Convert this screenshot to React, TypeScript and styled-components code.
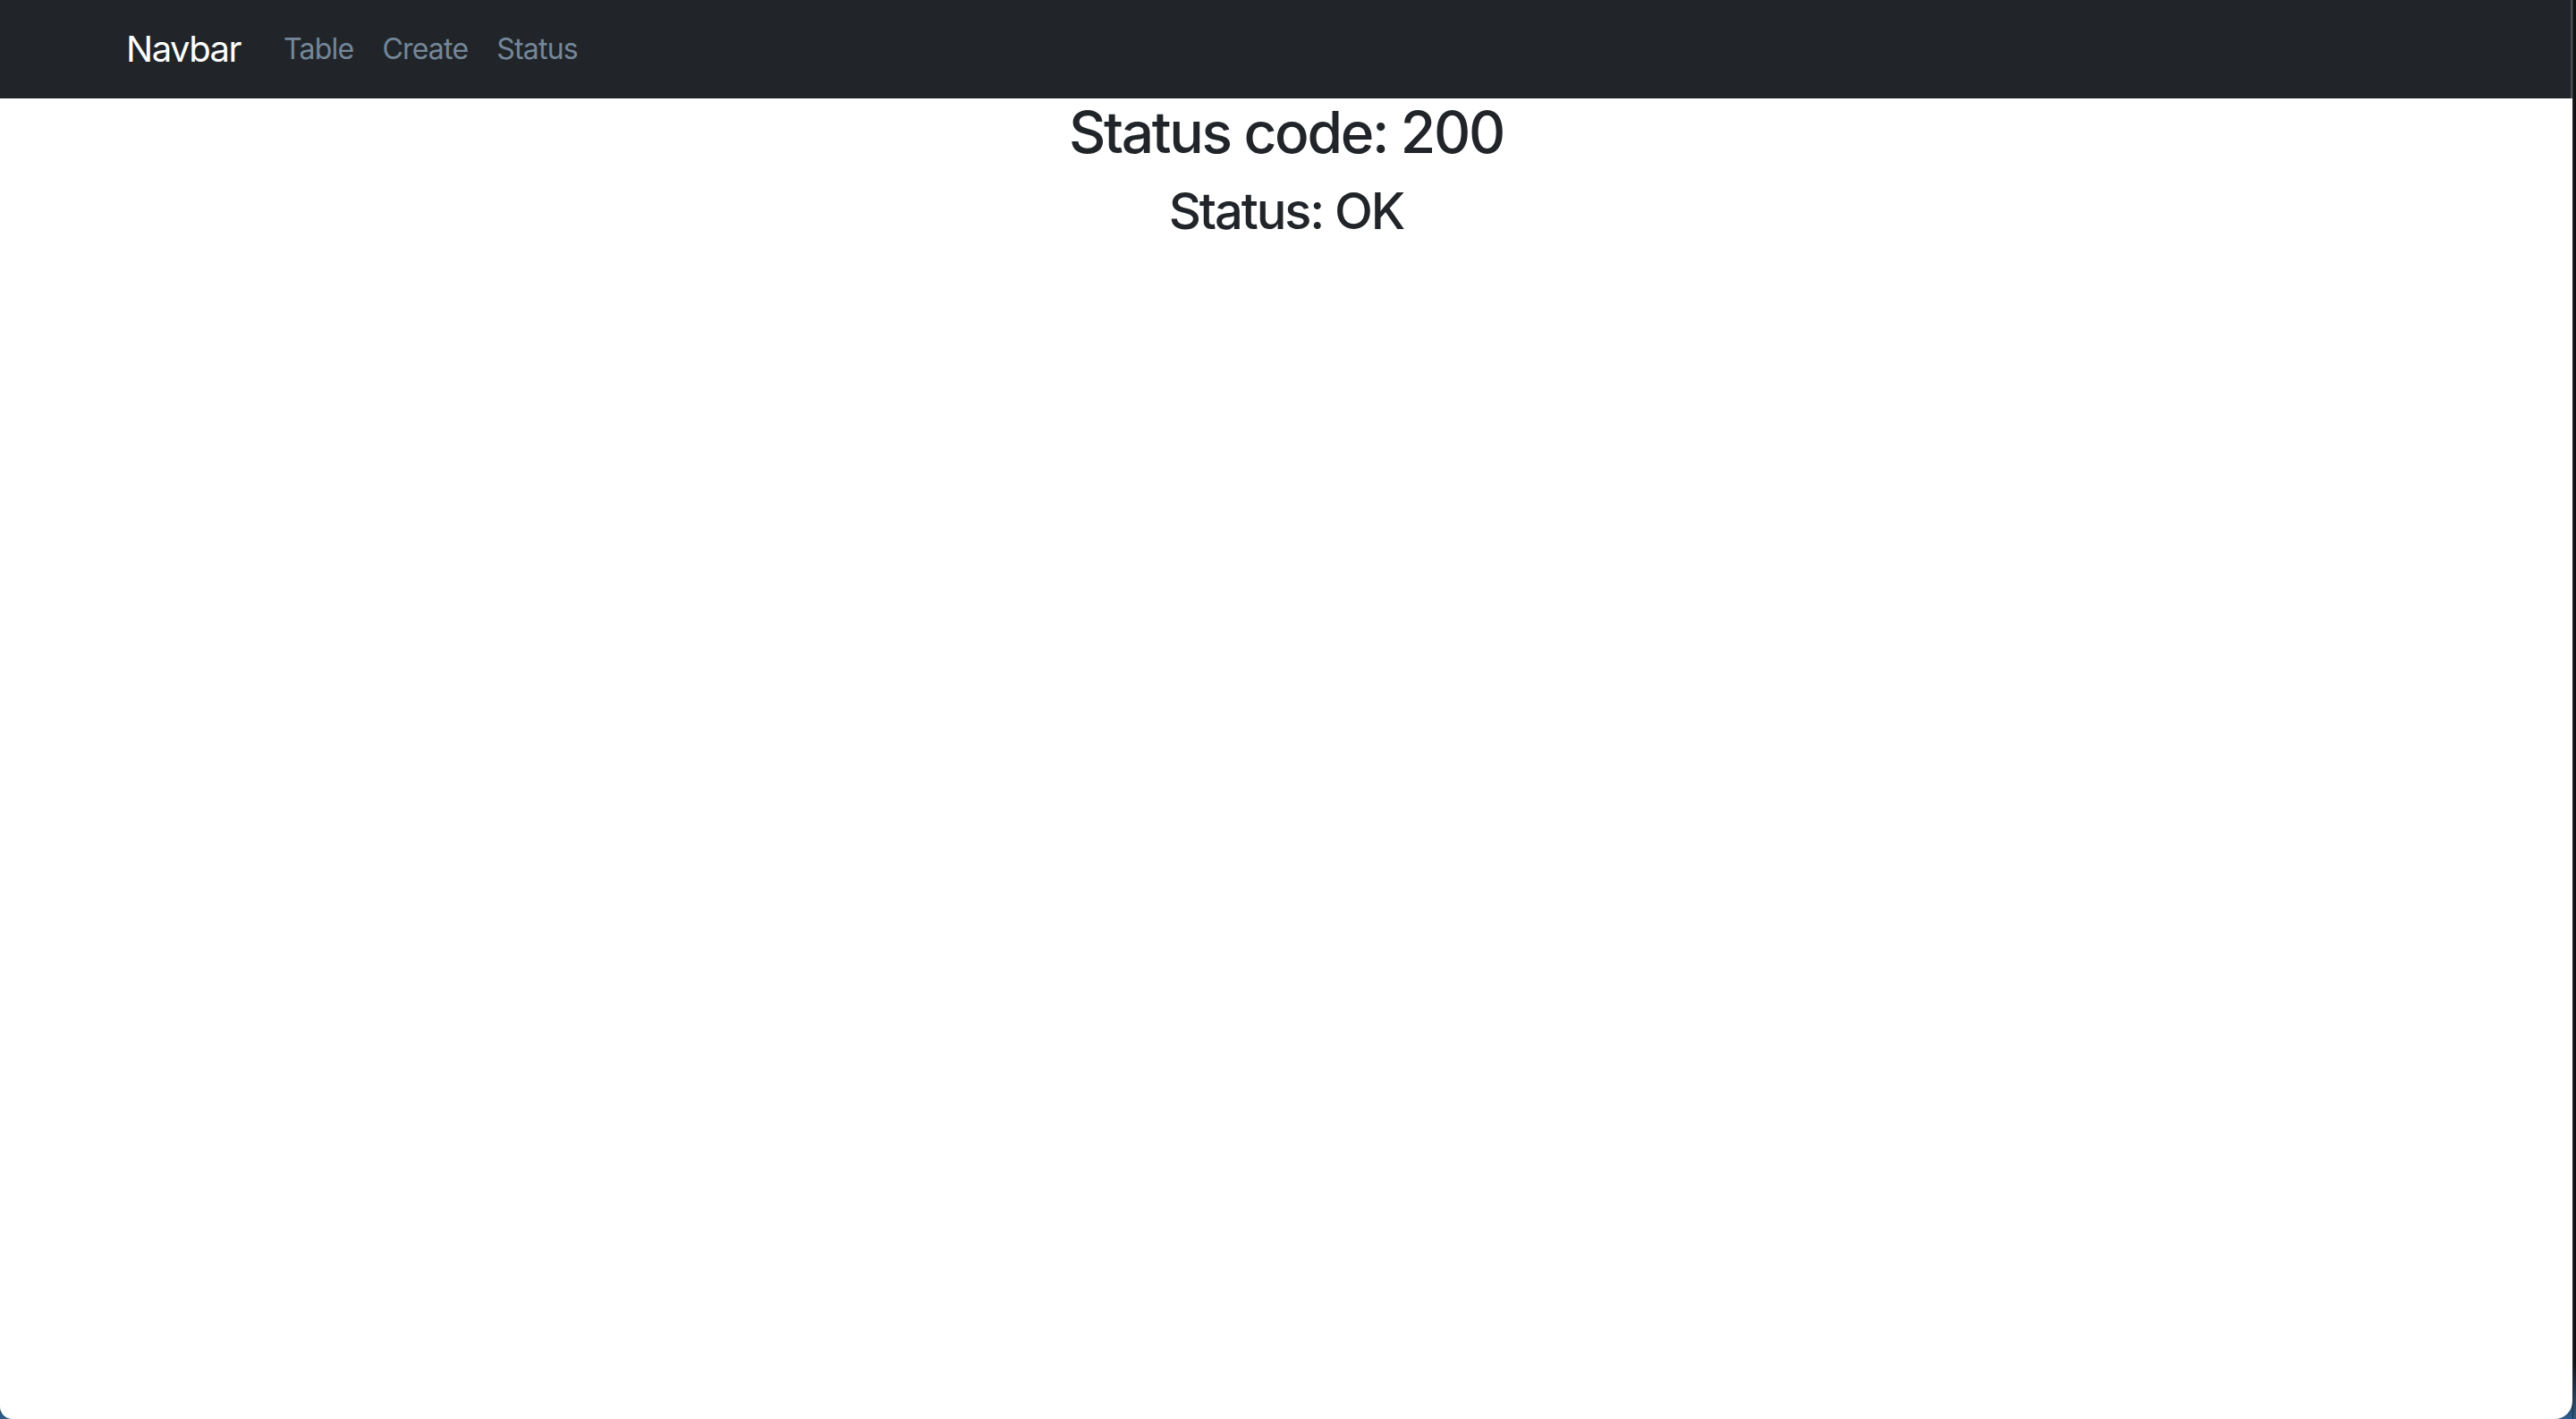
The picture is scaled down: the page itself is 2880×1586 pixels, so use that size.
import React from "react";
import styled, { createGlobalStyle } from "styled-components";

const GlobalStyle = createGlobalStyle`
  html, body {
    margin: 0;
    padding: 0;
    height: 100%;
  }
  body {
    background: #16181c;
    font-family: Inter, "Noto Sans", "Liberation Sans", sans-serif;
    overflow: hidden;
  }
  #root {
    height: 100%;
  }
`;

const Frame = styled.div`
  display: flex;
  width: 2880px;
  height: 1586px;
  background: linear-gradient(180deg, #111214 0%, #111214 96%, #2f5d8c 100%);
`;

const Page = styled.div`
  flex: 0 0 2876px;
  display: flex;
  flex-direction: column;
  background: #ffffff;
  border-bottom-left-radius: 14px;
  border-bottom-right-radius: 20px;
  overflow: hidden;
`;

const EdgeStrip = styled.div`
  flex: 1;
  border-left: 1px solid #2a2b2e;
`;

const NavBar = styled.nav`
  height: 110px;
  background: #212529;
  border-right: 2px solid #4b4e53;
  display: flex;
  align-items: center;
`;

const NavContainer = styled.div`
  width: 100%;
  max-width: 2640px;
  margin: 0 auto;
  padding: 0 24px;
  box-sizing: border-box;
  display: flex;
  align-items: center;
`;

const Brand = styled.a`
  font-size: 40px;
  line-height: 60px;
  color: #ffffff;
  text-decoration: none;
  margin-right: 32px;
  letter-spacing: -1.5px;
`;

const NavList = styled.ul`
  display: flex;
  list-style: none;
  margin: 0;
  padding: 0;
`;

const NavLink = styled.a`
  display: block;
  padding: 0 16px;
  font-size: 32px;
  line-height: 48px;
  color: #748799;
  text-decoration: none;
  letter-spacing: -0.8px;
`;

const Content = styled.main`
  display: flex;
  flex-direction: column;
  align-items: center;
  color: #212529;
`;

const Title = styled.h2<{ $size: number; $gap: number; $track: number }>`
  margin: 0 0 ${(p) => p.$gap}px;
  font-size: ${(p) => p.$size}px;
  line-height: 1.2;
  font-weight: 520;
  letter-spacing: ${(p) => p.$track}px;
  text-align: center;
`;

export default function App() {
  return (
    <>
      <GlobalStyle />
      <Frame>
        <Page>
          <NavBar>
            <NavContainer>
              <Brand href="#">Navbar</Brand>
              <NavList>
                <li>
                  <NavLink href="#">Table</NavLink>
                </li>
                <li>
                  <NavLink href="#">Create</NavLink>
                </li>
                <li>
                  <NavLink href="#">Status</NavLink>
                </li>
              </NavList>
            </NavContainer>
          </NavBar>
          <Content>
            <Title $size={64} $gap={16} $track={-2.3}>
              Status code: 200
            </Title>
            <Title as="h3" $size={56} $gap={16} $track={-2.1}>
              Status: OK
            </Title>
          </Content>
        </Page>
        <EdgeStrip />
      </Frame>
    </>
  );
}
